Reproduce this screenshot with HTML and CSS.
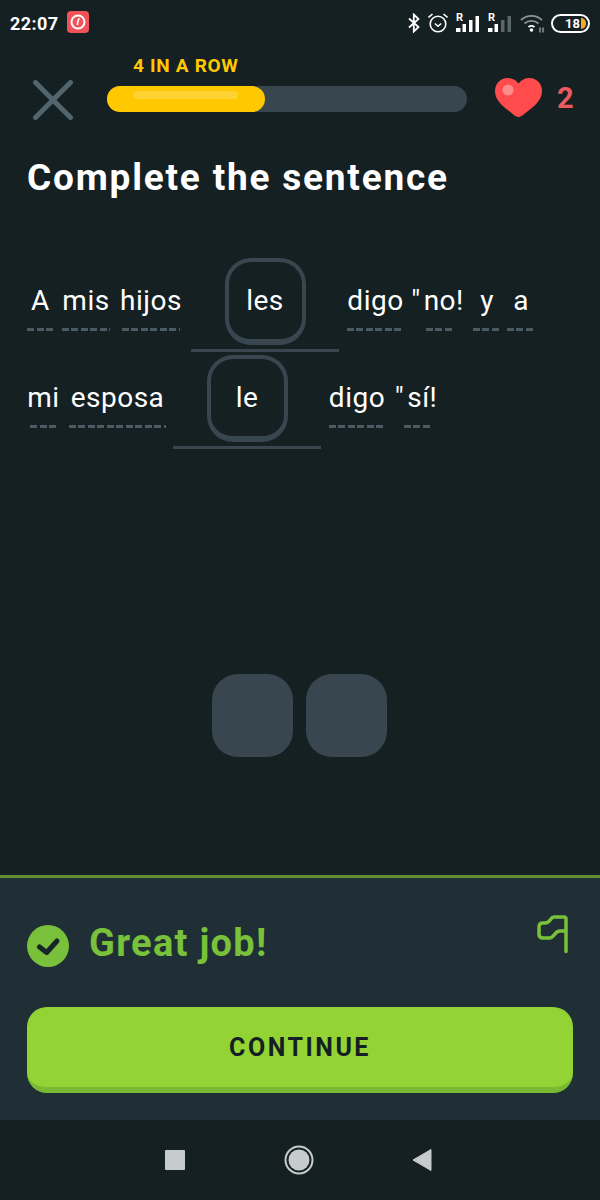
FILE: index.html
```html
<!DOCTYPE html>
<html lang="en">
<head>
  <meta charset="UTF-8" />
  <meta name="viewport" content="width=device-width, initial-scale=1.0"/>
  <title>Complete the sentence</title>
  <link rel="stylesheet" href="styles.css">
</head>
<body>
  <div class="status-bar">
    <span class="clock">22:07</span>
    <svg class="timer-icon" width="22" height="22" viewBox="0 0 22 22">
      <rect width="22" height="22" rx="4" fill="#f0525a"/>
      <circle cx="11" cy="11" r="6.5" fill="none" stroke="#fff" stroke-width="2"/>
      <path d="M12.5 7.5C11 8.5 10.5 10 10.5 14" fill="none" stroke="#fff" stroke-width="1.6"/>
    </svg>
    <div class="status-right">
      <svg width="12" height="20" viewBox="0 0 12 20">
        <path d="M1 5.5L10.5 14 5.8 18.5V1.5L10.5 6 1 14.5" fill="none" stroke="#fff" stroke-width="1.8"/>
      </svg>
      <svg width="20" height="20" viewBox="0 0 20 20">
        <circle cx="10" cy="11" r="7.800" fill="none" stroke="#fff" stroke-width="1.6"/>
        <path d="M6.8 10.5L10 13.2 13.2 10.5" fill="none" stroke="#fff" stroke-width="1.5"/>
        <path d="M0.500 4.500L4.500 1M19.500 4.500L15.500 1" fill="none" stroke="#fff" stroke-width="1.6"/>
      </svg>
      <div class="signal">
        <span class="roaming">R</span>
        <svg width="24" height="18" viewBox="0 0 24 18">
          <path d="M0 13h4.500v4H0zM6.500 9h3.500v8H6.500zM13 5h3.500v12H13zM19.500 1h3.500v16h-3.500z" fill="#fff"/>
        </svg>
      </div>
      <div class="signal">
        <span class="roaming">R</span>
        <svg width="24" height="18" viewBox="0 0 24 18">
          <path d="M0 13h4.500v4H0zM6.500 9h3.500v8H6.500z" fill="#fff"/>
          <path d="M13 5h3.500v12H13zM19.500 1h3.500v16h-3.500z" fill="#5a6669"/>
        </svg>
      </div>
      <svg class="wifi" width="25" height="20" viewBox="0 0 25 20">
        <path d="M1 7C7 1.500 16 1.500 22 7M4.500 10.500C8.500 7 14.500 7 18.500 10.500" fill="none" stroke="#8c9496" stroke-width="1.700"/>
        <path d="M8.500 14C10.500 12.500 12.500 12.500 14.500 14" fill="none" stroke="#fff" stroke-width="1.700"/>
        <circle cx="11.500" cy="17" r="1.800" fill="#fff"/>
        <path d="M20 14.500v5M23 14.500v5" stroke="#8c9496" stroke-width="1.500"/>
      </svg>
      <div class="battery">
        <span class="battery-num">18</span>
        <span class="battery-fill"></span>
      </div>
    </div>
  </div>

  <div class="main">
    <div class="lesson-header">
      <svg class="close-icon" width="40" height="40" viewBox="0 0 40 40">
        <path d="M2.500 2.500L37.500 37.500M37.500 2.500L2.500 37.500" stroke="#52656d" stroke-width="5" stroke-linecap="round"/>
      </svg>
      <div class="progress-wrap">
        <div class="streak">4 IN A ROW</div>
        <div class="progress">
          <div class="progress-fill"><span class="progress-shine"></span></div>
        </div>
      </div>
      <svg class="heart" width="47" height="40" viewBox="0 0 47 40">
        <path d="M23.500 39C21.500 39 19.500 37.500 14 33 6 27 0 21 0 13 0 5.500 5.500 0 12.500 0 17 0 21 2 23.500 5.500 26 2 30 0 34.500 0 41.500 0 47 5.500 47 13 47 21 41 27 33 33 27.500 37.500 25.500 39 23.500 39Z" fill="#ff4b4b"/>
        <circle cx="13" cy="12" r="5.500" fill="#ff8c8c"/>
      </svg>
      <span class="hearts">2</span>
    </div>

    <h1 class="title">Complete the sentence</h1>

    <div class="sentence">
      <div class="line">
        <div class="word w-a"><span>A</span><i class="dashes"></i></div>
        <div class="word w-mis"><span>mis</span><i class="dashes"></i></div>
        <div class="word w-hijos"><span>hijos</span><i class="dashes"></i></div>
        <div class="blank"><div class="chip">les</div></div>
        <div class="word w-digo"><span>digo</span><i class="dashes"></i></div>
        <div class="word w-no"><span class="quoted"><span class="quote">"</span>no!</span><i class="dashes"></i></div>
        <div class="word w-y"><span>y</span><i class="dashes"></i></div>
        <div class="word w-last"><span>a</span><i class="dashes"></i></div>
      </div>
      <div class="line">
        <div class="word w-mi"><span>mi</span><i class="dashes"></i></div>
        <div class="word w-esposa"><span>esposa</span><i class="dashes"></i></div>
        <div class="blank"><div class="chip">le</div></div>
        <div class="word w-digo2"><span>digo</span><i class="dashes"></i></div>
        <div class="word w-si"><span class="quoted"><span class="quote">"</span>sí!</span><i class="dashes"></i></div>
      </div>
    </div>

    <div class="bank">
      <div class="slot"></div>
      <div class="slot"></div>
    </div>
  </div>

  <div class="result">
    <div class="result-top">
      <svg class="check" width="42" height="42" viewBox="0 0 42 42">
        <circle cx="21" cy="21" r="21" fill="#79c13a"/>
        <path d="M12.500 22L19.700 27.500 30 16" fill="none" stroke="#17252b" stroke-width="5" stroke-linecap="round" stroke-linejoin="round"/>
      </svg>
      <span class="result-text">Great job!</span>
      <svg class="flag" width="34" height="40" viewBox="0 0 34 40">
        <path d="M29 37.500V5C29 3.500 28 3 27 3H17C13 3 13.500 9 8 9H6C3.500 9 2 10.500 2 13V20C2 22.500 3.500 24 6 24H12C18 24 17 17 23 17H29" fill="none" stroke="#7ac13a" stroke-width="3.500" stroke-linecap="round" stroke-linejoin="round"/>
      </svg>
    </div>
    <button class="continue">CONTINUE</button>
  </div>

  <div class="nav-bar">
    <span class="nav-square"></span>
    <svg width="30" height="30" viewBox="0 0 30 30">
      <circle cx="15" cy="15" r="13.500" fill="none" stroke="#c6cccb" stroke-width="2"/>
      <circle cx="15" cy="15" r="10.500" fill="#c6cccb"/>
    </svg>
    <svg width="20" height="24" viewBox="0 0 20 24">
      <path d="M19 1.500V22.500L1 12Z" fill="#c6cccb" stroke="#c6cccb" stroke-linejoin="round"/>
    </svg>
  </div>
</body>
</html>
```

FILE: styles.css
```css
* {
  box-sizing: border-box;
}

body {
  font-family: Roboto, Arial, sans-serif;
  background-color: #152023;
  color: white;
  display: flex;
  flex-direction: column;
  height: 100vh;
  margin: 0;
}

/* status bar */
.status-bar {
  display: flex;
  align-items: center;
  height: 46px;
  padding: 0 10px;
  flex-shrink: 0;
}

.clock {
  font-size: 18px;
  font-weight: 700;
  letter-spacing: 0.4px;
}

.timer-icon {
  margin-left: 9px;
  margin-top: -2px;
}

.status-right {
  display: flex;
  align-items: center;
  gap: 8px;
  margin-left: auto;
}

.signal {
  position: relative;
  width: 24px;
  height: 20px;
  display: flex;
  align-items: flex-end;
}

.roaming {
  position: absolute;
  left: 0;
  top: -2px;
  font-size: 11px;
  font-weight: 700;
}

.battery {
  position: relative;
  width: 39px;
  height: 19px;
  margin-left: -2px;
  border: 2px solid white;
  border-radius: 10px;
  display: flex;
  align-items: center;
  justify-content: flex-end;
  padding-right: 2px;
}

.battery-num {
  font-size: 13px;
  font-weight: 700;
  margin-right: 1px;
}

.battery-fill {
  width: 5px;
  height: 11px;
  background: #f0a92e;
  border-radius: 0 5px 5px 0;
}

/* lesson */
.main {
  flex: 1;
  padding: 0 27px;
}

.lesson-header {
  display: flex;
  align-items: flex-end;
  height: 74px;
  padding-left: 6px;
}

.close-icon {
  flex-shrink: 0;
}

.progress-wrap {
  width: 360px;
  flex-shrink: 0;
  margin-left: 34px;
  margin-bottom: 8px;
}

.streak {
  color: #ffc800;
  font-size: 19px;
  font-weight: 700;
  letter-spacing: 0.7px;
  line-height: 22px;
  margin-left: 26px;
  margin-bottom: 9px;
}

.progress {
  height: 26px;
  background: #37464f;
  border-radius: 13px;
}

.progress-fill {
  width: 158px;
  height: 26px;
  background: #ffc800;
  border-radius: 13px;
  padding: 5px 27px 0 26px;
}

.progress-shine {
  display: block;
  height: 8px;
  background: rgba(255, 255, 255, 0.2);
  border-radius: 4px;
}

.heart {
  margin-left: 28px;
  margin-bottom: 2px;
  flex-shrink: 0;
}

.hearts {
  color: #ea5a5e;
  font-size: 29px;
  font-weight: 700;
  margin-left: 15px;
  margin-bottom: 5px;
}

.title {
  font-size: 37px;
  font-weight: 700;
  letter-spacing: 1.8px;
  line-height: 44px;
  margin: 36px 0 0;
}

.sentence {
  margin-top: 58px;
}

.line {
  display: flex;
  height: 97px;
}

.word {
  display: flex;
  flex-direction: column;
  align-items: center;
  padding-top: 26px;
  font-size: 28px;
  letter-spacing: 0.5px;
  line-height: 33px;
  white-space: nowrap;
}

.quoted {
  margin-right: 4px;
}

.quote {
  margin-right: 3px;
}

.dashes {
  display: block;
  width: 100%;
  height: 3px;
  margin-top: 11px;
  background: repeating-linear-gradient(90deg, #4b5b64 0 7px, transparent 7px 9.500px);
}

.w-a { width: 27px; margin-right: 8px; }
.w-mis { width: 48px; margin-right: 12px; }
.w-hijos { width: 58px; margin-right: 11px; }
.w-digo { width: 57px; margin-left: 8px; margin-right: 22px; }
.w-no { width: 27px; margin-right: 20px; }
.w-y { width: 28px; margin-right: 6px; }
.w-last { width: 28px; }

.w-mi { width: 27px; margin-left: 3px; margin-right: 12px; }
.w-esposa { width: 97px; margin-right: 7px; }
.w-digo2 { width: 56px; margin-left: 8px; margin-right: 19px; }
.w-si { width: 28px; }

.blank {
  width: 148px;
  height: 94px;
  border-bottom: 3px solid #37464f;
  display: flex;
  justify-content: center;
  flex-shrink: 0;
}

.chip {
  width: 81px;
  height: 87px;
  border: 4px solid #37464f;
  border-bottom-width: 6px;
  border-radius: 26px;
  display: flex;
  align-items: center;
  justify-content: center;
  font-size: 28px;
  letter-spacing: 0.5px;
}

.bank {
  display: flex;
  justify-content: center;
  gap: 13px;
  margin-top: 222px;
  margin-left: -2px;
}

.slot {
  width: 81px;
  height: 83px;
  background: #37464f;
  border-radius: 26px;
}

/* result panel */
.result {
  height: 245px;
  flex-shrink: 0;
  background: #202f36;
  border-top: 3px solid #5f8f31;
  padding: 0 27px;
}

.result-top {
  display: flex;
  align-items: center;
  height: 129px;
}

.check {
  flex-shrink: 0;
  margin-top: 7px;
}

.result-text {
  color: #79c13a;
  font-size: 38px;
  font-weight: 700;
  letter-spacing: 1.3px;
  margin-left: 20px;
}

.flag {
  margin-left: auto;
  margin-right: 2px;
  margin-bottom: 18px;
}

.continue {
  display: block;
  width: 100%;
  height: 86px;
  background: #93d333;
  border: none;
  border-bottom: 6px solid #79b933;
  border-radius: 20px;
  color: #131f24;
  font-family: inherit;
  font-size: 25px;
  font-weight: 700;
  letter-spacing: 2.500px;
}

/* android nav */
.nav-bar {
  height: 80px;
  flex-shrink: 0;
  display: flex;
  align-items: center;
  padding-left: 165px;
  padding-right: 168px;
  justify-content: space-between;
}

.nav-square {
  width: 20px;
  height: 20px;
  background: #c6cccb;
  border-radius: 1px;
}
```
